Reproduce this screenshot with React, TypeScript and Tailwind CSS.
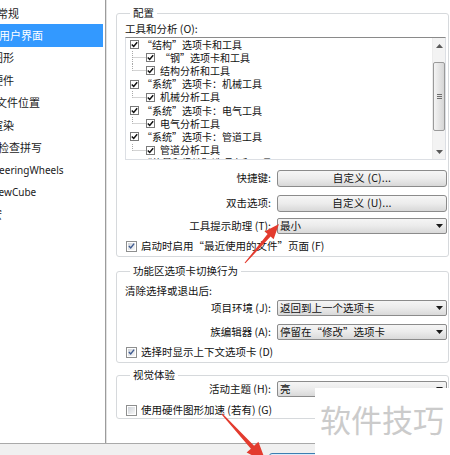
import React from "react";

type NavItem = { t: string; cls: string; sel?: boolean; latin?: boolean };

const navItems: NavItem[] = [
  { t: "常规", cls: "ml-[-3px]" },
  { t: "用户界面", cls: "ml-[-1px]", sel: true },
  { t: "图形", cls: "ml-[-8px]" },
  { t: "硬件", cls: "ml-[-8px]" },
  { t: "文件位置", cls: "ml-[-4px]" },
  { t: "渲染", cls: "ml-[-8px]" },
  { t: "检查拼写", cls: "ml-[-2px]" },
  { t: "SteeringWheels", cls: "ml-[-10px]", latin: true },
  { t: "ViewCube", cls: "ml-[-10px]", latin: true },
  { t: "宏", cls: "ml-[-9px]" },
];

type TreeRow = { level: 0 | 1; text: string; last?: boolean };

const treeRows: TreeRow[] = [
  { level: 0, text: "“结构”选项卡和工具" },
  { level: 1, text: "“钢”选项卡和工具" },
  { level: 1, text: "结构分析和工具", last: true },
  { level: 0, text: "“系统”选项卡：机械工具" },
  { level: 1, text: "机械分析工具", last: true },
  { level: 0, text: "“系统”选项卡：电气工具" },
  { level: 1, text: "电气分析工具", last: true },
  { level: 0, text: "“系统”选项卡：管道工具" },
  { level: 1, text: "管道分析工具", last: true },
  { level: 0, text: "“体量和场地”选项卡和工具" },
];

function TreeCheck() {
  return (
    <div className="size-[9px] shrink-0 border border-[#7a7a7a] bg-white flex items-center justify-center">
      <svg width="7" height="7" viewBox="0 0 7 7">
        <path d="M0.8 3.4 L2.7 5.4 L6.2 1.2" fill="none" stroke="#111" strokeWidth="1.5" />
      </svg>
    </div>
  );
}

function WinCheck({ checked }: { checked?: boolean }) {
  return (
    <div className="size-[11px] shrink-0 border border-[#8e8f8f] bg-white p-[1px]">
      <div className="size-full bg-linear-to-br from-[#cfd3d9] to-[#f8f8f8] flex items-center justify-center">
        {checked && (
          <svg width="8" height="8" viewBox="0 0 8 8">
            <path d="M1 4 L3.1 6.2 L7 1.3" fill="none" stroke="#3f5b91" strokeWidth="1.6" />
          </svg>
        )}
      </div>
    </div>
  );
}

function Connector({ last }: { last?: boolean }) {
  return (
    <svg width="20" height="13" viewBox="0 0 20 13" className="shrink-0">
      <line x1="6.5" y1="0" x2="6.5" y2={last ? 6.5 : 13} stroke="#a8a8a8" strokeDasharray="1 1" />
      <line x1="6.5" y1="6.5" x2="20" y2="6.5" stroke="#a8a8a8" strokeDasharray="1 1" />
    </svg>
  );
}

function DropArrow() {
  return (
    <svg width="7" height="4" viewBox="0 0 7 4" className="shrink-0 mr-[3px]">
      <path d="M0 0 H7 L3.5 4 Z" fill="#1a1a1a" />
    </svg>
  );
}

function Combo({ value }: { value: string }) {
  return (
    <div className="flex-1 h-[16px] border border-[#8b8b8b] rounded-[2px] bg-linear-to-b from-[#f5f5f5] via-[#ebebeb] to-[#d9d9d9] flex items-center justify-between pl-[2px]">
      <span className="leading-none">{value}</span>
      <DropArrow />
    </div>
  );
}

function PushButton({ label }: { label: string }) {
  return (
    <div className="flex-1 h-[17px] border border-[#8b8b8b] rounded-[3px] bg-linear-to-b from-[#f6f6f6] via-[#ececec] to-[#d8d8d8] flex items-center justify-center">
      <span className="leading-none tracking-[0.2px]">{label}</span>
    </div>
  );
}

function FieldRow({ label, children, className }: { label: string; children: React.ReactNode; className: string }) {
  return (
    <div className={"flex items-center " + className}>
      <div className="w-[146px] text-right leading-none whitespace-nowrap">{label}</div>
      <div className="ml-[6px] flex-1 flex">{children}</div>
    </div>
  );
}

function GroupBox({ title, className, children }: { title: string; className: string; children: React.ReactNode }) {
  return (
    <fieldset className={"border border-[#d6d9dc] rounded-[3px] pl-[8px] pr-[1px] " + className}>
      <legend className="ml-[5px] px-[3px] leading-[14px]">{title}</legend>
      {children}
    </fieldset>
  );
}

function ScrollBar() {
  return (
    <div className="w-[13px] shrink-0 bg-[#f3f3f3] border-l border-[#ececec] flex flex-col items-center">
      <svg width="7" height="4" viewBox="0 0 7 4" className="mt-[6px]">
        <path d="M0 4 H7 L3.5 0 Z" fill="#5a5a5a" />
      </svg>
      <div className="mt-[14px] w-[12px] h-[69px] rounded-[2px] border border-[#9a9a9a] bg-linear-to-r from-[#f4f4f4] to-[#d6d6d6] flex flex-col items-center justify-center gap-[1px]">
        <div className="w-[5px] h-[1px] bg-[#6e6e6e]" />
        <div className="w-[5px] h-[1px] bg-[#6e6e6e]" />
        <div className="w-[5px] h-[1px] bg-[#6e6e6e]" />
      </div>
      <svg width="7" height="4" viewBox="0 0 7 4" className="mt-auto mb-[5px]">
        <path d="M0 0 H7 L3.5 4 Z" fill="#5a5a5a" />
      </svg>
    </div>
  );
}

function ToolTree() {
  return (
    <div className="mt-[1px] mr-[1px] h-[123px] border border-[#dcdfe4] border-t-[#8a8a8a] bg-white flex overflow-hidden">
      <div className="flex-1 overflow-hidden text-[10px]">
        {treeRows.map((r, i) => (
          <div key={i} className="h-[13.2px] flex items-center whitespace-nowrap">
            {r.level === 0 ? (
              <>
                <div className="ml-[4px]" />
                <TreeCheck />
                <span className="ml-[3px] leading-none">{r.text}</span>
              </>
            ) : (
              <>
                <Connector last={r.last} />
                <TreeCheck />
                <span className="ml-[5px] leading-none">{r.text}</span>
              </>
            )}
          </div>
        ))}
      </div>
      <ScrollBar />
    </div>
  );
}

export default function App() {
  return (
    <div
      lang="zh-CN"
      className="relative w-[450px] h-[455px] overflow-hidden bg-white text-[10.5px] text-[#111] font-['Noto_Sans_CJK_SC','Noto_Sans',sans-serif]"
    >
      <div className="flex h-[443px]">
        {/* option category list */}
        <div className="w-[106px] h-full border-r border-[#9c9c9c] bg-white pt-[2px] overflow-hidden text-[11px]">
          {navItems.map((it) => (
            <div
              key={it.t}
              className={
                "h-[22.4px] mr-[2px] flex items-center whitespace-nowrap " +
                (it.sel ? "bg-[#3399ff] text-white" : "text-[#1a1a1a]")
              }
            >
              <span className={"leading-none " + it.cls + (it.latin ? " text-[10px] font-['Noto_Sans',sans-serif]" : "")}>
                {it.t}
              </span>
            </div>
          ))}
        </div>
        <div className="w-[1px] h-full bg-[#e2e2e2]" />

        {/* settings page */}
        <div className="flex-1 flex flex-col pl-[9px] pr-[1px] pt-[6px] bg-white">
          <GroupBox title="配置" className="pb-[3px]">
            <div className="mt-[2px] h-[14px] leading-[14px]">工具和分析 (O):</div>
            <ToolTree />
            <FieldRow label="快捷键:" className="mt-[10px]">
              <PushButton label="自定义 (C)..." />
            </FieldRow>
            <FieldRow label="双击选项:" className="mt-[8px]">
              <PushButton label="自定义 (U)..." />
            </FieldRow>
            <FieldRow label="工具提示助理 (T):" className="mt-[6px]">
              <Combo value="最小" />
            </FieldRow>
            <div className="mt-[5px] h-[14px] flex items-center">
              <div className="ml-[1px]" />
              <WinCheck checked />
              <span className="ml-[4px] leading-none whitespace-nowrap">启动时启用“最近使用的文件”页面 (F)</span>
            </div>
          </GroupBox>

          <GroupBox title="功能区选项卡切换行为" className="mt-[7px] pb-[3px]">
            <div className="mt-[6px] h-[14px] leading-[14px]">清除选择或退出后:</div>
            <FieldRow label="项目环境 (J):" className="mt-[2px]">
              <Combo value="返回到上一个选项卡" />
            </FieldRow>
            <FieldRow label="族编辑器 (A):" className="mt-[8px]">
              <Combo value="停留在“修改”选项卡" />
            </FieldRow>
            <div className="mt-[5px] h-[14px] flex items-center">
              <div className="ml-[1px]" />
              <WinCheck checked />
              <span className="ml-[4px] leading-none whitespace-nowrap">选择时显示上下文选项卡 (D)</span>
            </div>
          </GroupBox>

          <GroupBox title="视觉体验" className="mt-[5px] pb-[1px]">
            <FieldRow label="活动主题 (H):" className="mt-[-1px]">
              <Combo value="亮" />
            </FieldRow>
            <div className="mt-[6px] h-[14px] flex items-center">
              <div className="ml-[1px]" />
              <WinCheck />
              <span className="ml-[4px] leading-none whitespace-nowrap">使用硬件图形加速 (若有) (G)</span>
            </div>
          </GroupBox>
        </div>
      </div>

      {/* dialog button strip */}
      <div className="h-[12px] bg-[#f0f0f0] border-t border-[#a9a9a9] overflow-hidden">
        <div className="ml-[269px] mt-[9px] w-[80px] h-[22px] rounded-[3px] border border-[#3c7fb1] bg-[#dcecfc]" />
      </div>

      {/* watermark label */}
      <div className="absolute left-[315px] top-[388px] w-[135px] h-[67px] bg-white">
        <div className="pl-[5px] pt-[15px] text-[31px] leading-none text-[#cbcbcb] whitespace-nowrap">软件技巧</div>
      </div>

      {/* annotation arrows */}
      <svg className="absolute left-0 top-0 pointer-events-none" width="450" height="455" viewBox="0 0 450 455">
        <polygon
          fill="#e33b2e"
          points="245.4,263.3 270.6,236.6 273.6,239.2 279,224 264.6,231.4 267.6,234 244.6,262.7"
        />
        <polygon
          fill="#e33b2e"
          points="222.4,413.6 254.1,445.7 258.4,441.8 266,462 246.6,452.6 250.9,448.7 221.6,414.4"
        />
      </svg>
    </div>
  );
}
